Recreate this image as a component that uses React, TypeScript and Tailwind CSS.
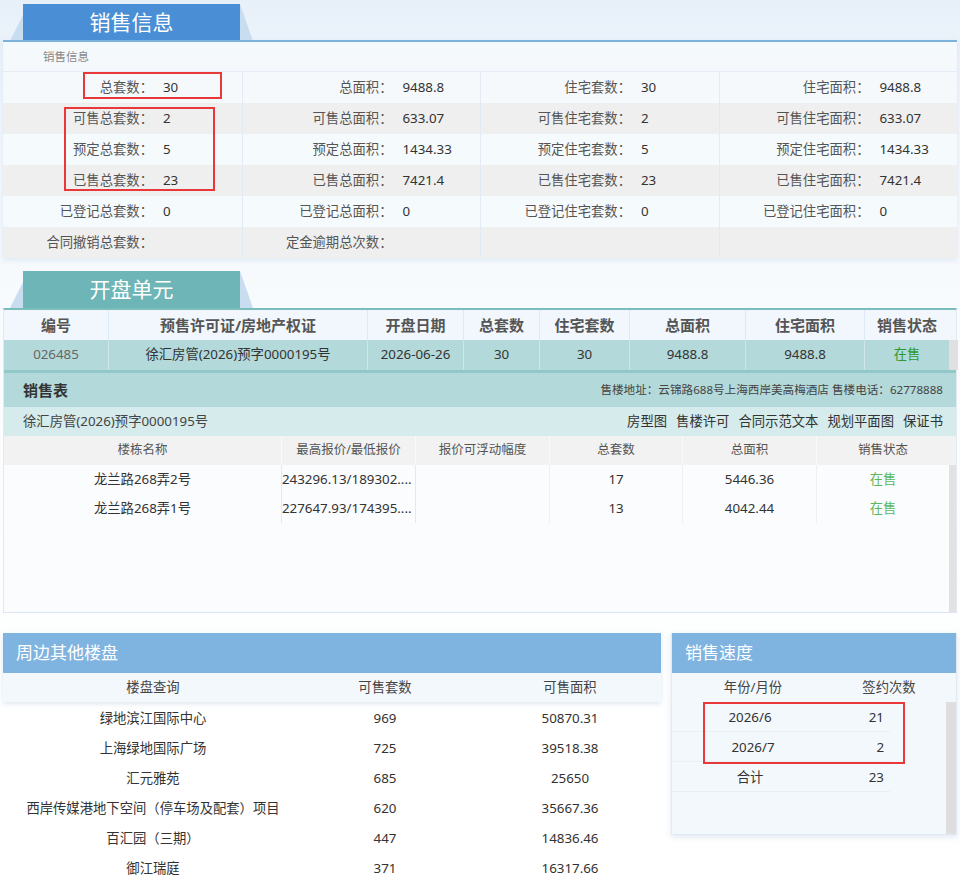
import React from 'react';

const info: [string, string][][] = [
  [['总套数：', '30'], ['总面积：', '9488.8'], ['住宅套数：', '30'], ['住宅面积：', '9488.8']],
  [['可售总套数：', '2'], ['可售总面积：', '633.07'], ['可售住宅套数：', '2'], ['可售住宅面积：', '633.07']],
  [['预定总套数：', '5'], ['预定总面积：', '1434.33'], ['预定住宅套数：', '5'], ['预定住宅面积：', '1434.33']],
  [['已售总套数：', '23'], ['已售总面积：', '7421.4'], ['已售住宅套数：', '23'], ['已售住宅面积：', '7421.4']],
  [['已登记总套数：', '0'], ['已登记总面积：', '0'], ['已登记住宅套数：', '0'], ['已登记住宅面积：', '0']],
  [['合同撤销总套数：', ''], ['定金逾期总次数：', ''], ['', ''], ['', '']],
];

const unitHead = ['编号', '预售许可证/房地产权证', '开盘日期', '总套数', '住宅套数', '总面积', '住宅面积', '销售状态'];

const nearby: [string, string, string][] = [
  ['绿地滨江国际中心', '969', '50870.31'],
  ['上海绿地国际广场', '725', '39518.38'],
  ['汇元雅苑', '685', '25650'],
  ['西岸传媒港地下空间（停车场及配套）项目', '620', '35667.36'],
  ['百汇园（三期）', '447', '14836.46'],
  ['御江瑞庭', '371', '16317.66'],
];

function Tab({ label, teal }: { label: string; teal?: boolean }) {
  return (
    <div className="flex h-[37px] items-stretch pl-[10px]">
      <div className="w-[13px] bg-[#c9ddf0] [clip-path:polygon(100%_30%,100%_100%,0_100%)]" />
      <div
        className={
          teal
            ? 'w-[217px] flex items-center justify-center text-white text-[21px] bg-[#6db5b6] pt-[1px]'
            : 'w-[217px] flex items-center justify-center text-white text-[21px] bg-[#4a8fd5] pt-[1px]'
        }
      >
        {label}
      </div>
      <div className="w-[13px] bg-[#c9ddf0] [clip-path:polygon(0_0,100%_100%,0_100%)]" />
    </div>
  );
}

export default function App() {
  return (
    <div className="relative w-[960px] h-[895px] overflow-hidden text-[13.33px] text-[#333] [font-family:'Noto_Sans','Noto_Sans_CJK_SC',sans-serif] bg-[linear-gradient(180deg,#e7f0f9_0%,#f2f7fc_12%,#f8fbfd_35%,#fcfdfe_60%,#ffffff_80%)]">
      <div className="pt-[4px]">
        {/* 销售信息 */}
        <div className="h-[36px] overflow-hidden">
          <Tab label="销售信息" />
        </div>
        <div className="mx-[3px] border-t-2 border-[#7db2df] bg-[#f5f9fc]/90 shadow-[0_2px_6px_rgba(150,180,215,0.25)]">
          <div className="h-[30px] flex items-center pl-[40px] pt-[1px] text-[11.5px] text-[#888] border-b border-[#e4edf6]">
            销售信息
          </div>
          {info.map((row, i) => (
            <div key={i} className={i % 2 === 1 ? 'grid grid-cols-4 h-[31px] bg-[#efefef]' : 'grid grid-cols-4 h-[31px]'}>
              {row.map((c, j) => (
                <div key={j} className={j === 0 ? 'flex items-center pt-[1px]' : 'flex items-center pt-[1px] border-l border-[#e2ebf4]'}>
                  <div className="w-[150px] text-right text-[#555] whitespace-nowrap">{c[0]}</div>
                  <div className="pl-[10px] text-[#333]">{c[1]}</div>
                </div>
              ))}
            </div>
          ))}
        </div>

        {/* 开盘单元 */}
        <div className="mt-[13px]">
          <Tab label="开盘单元" teal />
        </div>
        <div className="mx-[3px] border-t-2 border-[#7bbcbd] border-x border-b border-x-[#e1eaf3] border-b-[#dce7f2] bg-[#fbfcfe]">
          <div className="grid grid-cols-[104px_259px_96px_76px_90px_116px_119px_85px_9px] h-[30px] bg-[#f1f7fc] text-[15px] font-bold text-[#555]">
            {unitHead.map((h, i) => (
              <div key={i} className={i === 0 ? 'flex items-center justify-center' : 'flex items-center justify-center border-l border-[#dde9f4]'}>
                {h}
              </div>
            ))}
            <div />
          </div>
          <div className="grid grid-cols-[104px_259px_96px_76px_90px_116px_119px_85px_9px] h-[33px] bg-[#b4d9da] border-b-[3px] border-[#93c8c9]">
            <div className="flex items-center justify-center text-[#666]">026485</div>
            <div className="flex items-center justify-center border-l border-[#cfe7e7]">徐汇房管(2026)预字0000195号</div>
            <div className="flex items-center justify-center border-l border-[#cfe7e7]">2026-06-26</div>
            <div className="flex items-center justify-center border-l border-[#cfe7e7]">30</div>
            <div className="flex items-center justify-center border-l border-[#cfe7e7]">30</div>
            <div className="flex items-center justify-center border-l border-[#cfe7e7]">9488.8</div>
            <div className="flex items-center justify-center border-l border-[#cfe7e7]">9488.8</div>
            <div className="flex items-center justify-center border-l border-[#cfe7e7] text-[#2e9a2e]">在售</div>
            <div className="bg-[#e0e0e0]" />
          </div>
          <div className="h-[34px] flex items-center justify-between bg-[#b4d9da] pl-[19px] pr-[13px]">
            <span className="text-[15px] font-bold text-[#333]">销售表</span>
            <span className="text-[11.6px] text-[#444]">售楼地址：云锦路688号上海西岸美高梅酒店 售楼电话：62778888</span>
          </div>
          <div className="h-[29px] flex items-center justify-between bg-[#d6ebec] pl-[19px] pr-[13px] text-[#444]">
            <span>徐汇房管(2026)预字0000195号</span>
            <div className="flex gap-[9px] text-[#333]">
              <span>房型图</span>
              <span>售楼许可</span>
              <span>合同示范文本</span>
              <span>规划平面图</span>
              <span>保证书</span>
            </div>
          </div>
          <div className="grid grid-cols-[277px_134px_134px_133px_134px_133px_9px] h-[29px] bg-[#f2f2f2] text-[12.5px] text-[#555]">
            <div className="flex items-center justify-center">楼栋名称</div>
            <div className="flex items-center justify-center border-l border-[#fafafa]">最高报价/最低报价</div>
            <div className="flex items-center justify-center border-l border-[#fafafa]">报价可浮动幅度</div>
            <div className="flex items-center justify-center border-l border-[#fafafa]">总套数</div>
            <div className="flex items-center justify-center border-l border-[#fafafa]">总面积</div>
            <div className="flex items-center justify-center border-l border-[#fafafa]">销售状态</div>
            <div />
          </div>
          <div className="flex h-[147px]">
            <div className="flex-1">
              {[
                ['龙兰路268弄2号', '243296.13/189302....', '17', '5446.36'],
                ['龙兰路268弄1号', '227647.93/174395....', '13', '4042.44'],
              ].map((r, i) => (
                <div key={i} className="grid grid-cols-[277px_134px_134px_133px_134px_133px] h-[29px]">
                  <div className="flex items-center justify-center">{r[0]}</div>
                  <div className="flex items-center border-l border-[#e8e8e8] overflow-hidden whitespace-nowrap">{r[1]}</div>
                  <div className="border-l border-[#e8e8e8]" />
                  <div className="flex items-center justify-center border-l border-[#f0f0f0]">{r[2]}</div>
                  <div className="flex items-center justify-center border-l border-[#f0f0f0]">{r[3]}</div>
                  <div className="flex items-center justify-center border-l border-[#f0f0f0] text-[#5cb85c]">在售</div>
                </div>
              ))}
            </div>
            <div className="w-[9px] bg-[#e2e2e2]" />
          </div>
        </div>

        {/* bottom */}
        <div className="mt-[20px] flex gap-[10px] pl-[3px]">
          <div className="w-[658px]">
            <div className="shadow-[0_2px_5px_rgba(150,175,205,0.3)]">
              <div className="h-[40px] bg-[#7fb4e1] flex items-center pl-[13px] text-white text-[17px]">周边其他楼盘</div>
              <div className="grid grid-cols-[300px_164px_194px] h-[29px] bg-[#f3f8fc] text-[#444]">
                <div className="flex items-center justify-center">楼盘查询</div>
                <div className="flex items-center justify-center">可售套数</div>
                <div className="flex items-center justify-center pl-[12px]">可售面积</div>
              </div>
            </div>
            <div className="pt-[2px]">
              {nearby.map((r, i) => (
                <div key={i} className="grid grid-cols-[300px_164px_194px] h-[30px]">
                  <div className="flex items-center justify-center whitespace-nowrap">{r[0]}</div>
                  <div className="flex items-center justify-center">{r[1]}</div>
                  <div className="flex items-center justify-center pl-[12px]">{r[2]}</div>
                </div>
              ))}
            </div>
          </div>
          <div className="w-[286px] h-[202px] flex flex-col bg-[#f3f8fc] border-b border-x border-[#e2ebf5] shadow-[0_2px_6px_rgba(150,175,205,0.3)]">
            <div className="h-[40px] bg-[#7fb4e1] flex items-center pl-[13px] text-white text-[17px]">销售速度</div>
            <div className="grid grid-cols-[162px_110px] h-[29px] text-[#444]">
              <div className="flex items-center justify-center">年份/月份</div>
              <div className="flex items-center justify-center">签约次数</div>
            </div>
            <div className="flex flex-1">
              <div className="flex-1">
                {[
                  ['2026/6', '21'],
                  ['2026/7', '2'],
                  ['合计', '23'],
                ].map((r, i) => (
                  <div key={i} className="w-[218px] grid grid-cols-[156px_62px] h-[30px] pt-[2px] border-b border-[#e7eff7]">
                    <div className={i === 1 ? 'flex items-center justify-center pl-[6px]' : 'flex items-center justify-center'}>{r[0]}</div>
                    <div className="flex items-center justify-end pr-[6px]">{r[1]}</div>
                  </div>
                ))}
              </div>
              <div className="w-[10px] bg-[#dedede]" />
            </div>
          </div>
        </div>
      </div>

      {/* annotation boxes */}
      <div className="absolute left-[83px] top-[72px] w-[139px] h-[27px] border-2 border-[#e8383a]" />
      <div className="absolute left-[64px] top-[107px] w-[151px] h-[84px] border-2 border-[#e8383a]" />
      <div className="absolute left-[703px] top-[702px] w-[202px] h-[62px] border-2 border-[#e8383a]" />
    </div>
  );
}
